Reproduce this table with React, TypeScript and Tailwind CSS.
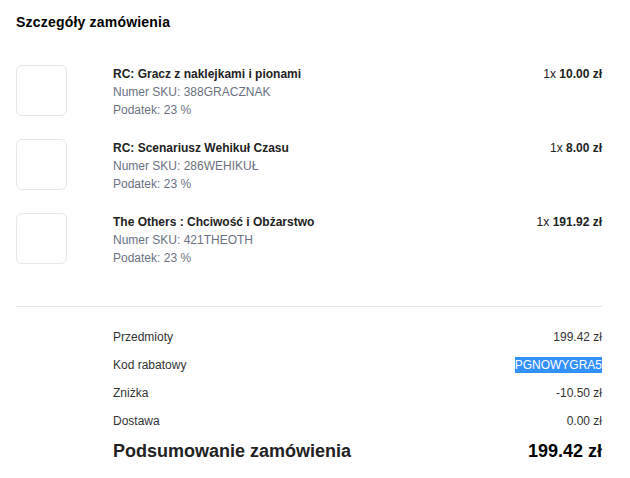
const items = [
  { name: 'RC: Gracz z naklejkami i pionami', sku: '388GRACZNAK', qty: 1, price: '10.00' },
  { name: 'RC: Scenariusz Wehikuł Czasu', sku: '286WEHIKUŁ', qty: 1, price: '8.00' },
  { name: 'The Others : Chciwość i Obżarstwo', sku: '421THEOTH', qty: 1, price: '191.92' },
];

const summary = [
  { label: 'Przedmioty', value: '199.42 zł' },
  { label: 'Kod rabatowy', value: 'PGNOWYGRA5', code: true },
  { label: 'Zniżka', value: '-10.50 zł' },
  { label: 'Dostawa', value: '0.00 zł' },
];

export default function App() {
  return (
    <div className="w-[630px] h-[478px] bg-white pl-4 pr-[28px] pt-3 font-['Liberation_Sans',Arial,sans-serif] text-[#222]">
      <h2 className="text-[14px] leading-5 font-bold text-black tracking-[0.2px]">Szczegóły zamówienia</h2>

      <div className="mt-[33px] flex flex-col gap-5">
        {items.map((item) => (
          <div key={item.sku} className="flex items-start">
            <div className="w-[51px] h-[51px] shrink-0 rounded-md border border-gray-200" />
            <div className="ml-[46px] flex-1 text-[12px] leading-[18px]">
              <div className="font-bold text-[#222]">{item.name}</div>
              <div className="text-gray-500">Numer SKU: {item.sku}</div>
              <div className="text-gray-500">Podatek: 23 %</div>
            </div>
            <div className="text-[12px] leading-[18px] text-[#222]">
              {item.qty}x <span className="font-bold">{item.price} zł</span>
            </div>
          </div>
        ))}
      </div>

      <div className="mt-[39px] border-t border-gray-200" />

      <div className="pl-[97px] pt-4">
        {summary.map((row) => (
          <div key={row.label} className="flex justify-between items-center h-7 text-[12px] text-[#333]">
            <span>{row.label}</span>
            {row.code ? (
              <span className="bg-[#3390ff] text-white leading-[16px]">{row.value}</span>
            ) : (
              <span>{row.value}</span>
            )}
          </div>
        ))}
        <div className="flex justify-between items-center h-8 font-bold">
          <span className="text-[18px] text-[#222]">Podsumowanie zamówienia</span>
          <span className="text-[18px] text-black">199.42 zł</span>
        </div>
      </div>
    </div>
  );
}
